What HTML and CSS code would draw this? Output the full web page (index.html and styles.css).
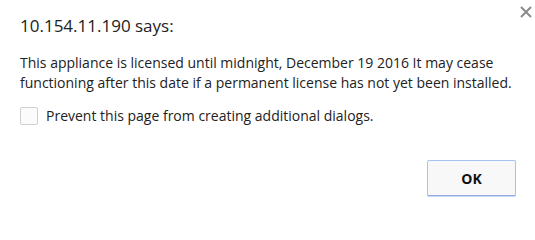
FILE: index.html
```html
<!DOCTYPE html>
<html>
<head>
<meta charset="utf-8">
<link rel="stylesheet" href="styles.css">
</head>
<body>
<div class="dialog">
  <button class="close" aria-label="Close">
    <svg width="12" height="12" viewBox="0 0 12 12"><path d="M1 1 L11 11 M11 1 L1 11" stroke="#8a8a8a" stroke-width="2" fill="none"/></svg>
  </button>
  <div class="title">10.154.11.190 says:</div>
  <div class="message">This appliance is licensed until midnight, December 19 2016 It may cease functioning after this date if a permanent license has not yet been installed.</div>
  <label class="prevent"><span class="checkbox"></span><span>Prevent this page from creating additional dialogs.</span></label>
  <div class="buttons"><button class="ok">OK</button></div>
</div>
</body>
</html>
```
FILE: styles.css
```css
html, body {
  margin: 0;
  padding: 0;
  background: #ffffff;
}
.dialog {
  position: relative;
  width: 535px;
  height: 211px;
  box-sizing: border-box;
  padding: 14px 19px 0 20px;
  font-family: "Open Sans", "Noto Sans", sans-serif;
  color: #222;
}
.close {
  position: absolute;
  top: 6px;
  right: 3px;
  width: 12px;
  height: 12px;
  padding: 0;
  border: 0;
  background: none;
  display: flex;
}
.title {
  font-size: 17px;
  line-height: 24px;
  color: #222;
}
.message {
  margin-top: 15px;
  font-size: 14px;
  line-height: 20px;
  color: #222;
}
.prevent {
  margin-top: 13px;
  display: flex;
  align-items: center;
  gap: 8px;
  font-size: 14px;
  line-height: 20px;
  color: #222;
}
.checkbox {
  width: 16px;
  height: 16px;
  border: 1px solid #cfcfcf;
  border-radius: 2px;
  background: #fbfbfb;
}
.buttons {
  display: flex;
  justify-content: flex-end;
  margin-top: 34px;
}
.ok {
  width: 89px;
  height: 36px;
  border: 1px solid #a8c1f3;
  border-bottom-color: #93abe0;
  border-radius: 2px;
  background: #f8f8f8;
  font-family: "Open Sans", "Noto Sans", sans-serif;
  font-weight: bold;
  font-size: 14px;
  color: #111;
  box-shadow: 0 1px 0 #c9d6f2;
}
```
